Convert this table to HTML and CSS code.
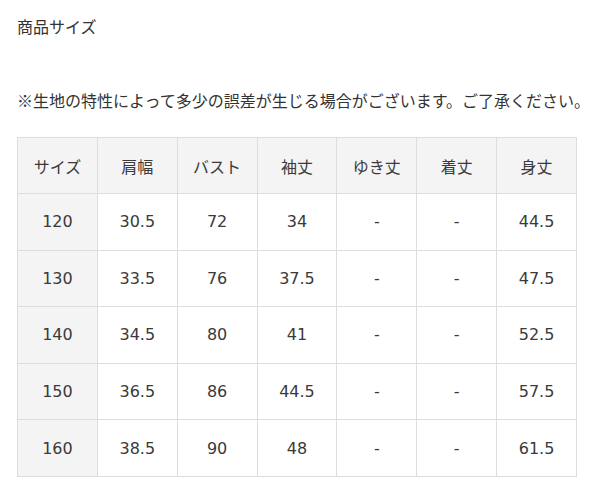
FILE: index.html
```html
<!DOCTYPE html>
<html lang="ja">
<head>
<meta charset="utf-8">
<link rel="stylesheet" href="styles.css">
</head>
<body>
<div class="page">
  <h2 class="title">商品サイズ</h2>
  <p class="note">※生地の特性によって多少の誤差が生じる場合がございます。ご了承ください。</p>
  <table class="size-table">
    <thead>
      <tr><th>サイズ</th><th>肩幅</th><th>バスト</th><th>袖丈</th><th>ゆき丈</th><th>着丈</th><th>身丈</th></tr>
    </thead>
    <tbody>
      <tr><th>120</th><td>30.5</td><td>72</td><td>34</td><td>-</td><td>-</td><td>44.5</td></tr>
      <tr><th>130</th><td>33.5</td><td>76</td><td>37.5</td><td>-</td><td>-</td><td>47.5</td></tr>
      <tr><th>140</th><td>34.5</td><td>80</td><td>41</td><td>-</td><td>-</td><td>52.5</td></tr>
      <tr><th>150</th><td>36.5</td><td>86</td><td>44.5</td><td>-</td><td>-</td><td>57.5</td></tr>
      <tr><th>160</th><td>38.5</td><td>90</td><td>48</td><td>-</td><td>-</td><td>61.5</td></tr>
    </tbody>
  </table>
</div>
</body>
</html>
```
FILE: styles.css
```css
html, body {
  margin: 0;
  padding: 0;
  background: #ffffff;
}
body {
  font-family: "Noto Sans CJK JP", "Noto Sans", sans-serif;
  color: #333333;
}
.page {
  padding: 14px 0 0 17px;
}
.title {
  margin: 0;
  font-size: 16px;
  font-weight: normal;
  line-height: 24px;
}
.note {
  margin: 50px 0 0 0;
  font-size: 16px;
  line-height: 24px;
  white-space: nowrap;
}
.size-table {
  margin-top: 25px;
  border-collapse: collapse;
  table-layout: fixed;
  width: 560px;
}
.size-table th,
.size-table td {
  border: 1px solid #dddddd;
  text-align: center;
  vertical-align: middle;
  font-family: "DejaVu Sans", "Noto Sans CJK JP", sans-serif;
  font-size: 16px;
  font-weight: normal;
  padding: 0;
  color: #3a3a3a;
}
.size-table thead th {
  font-family: "Noto Sans CJK JP", sans-serif;
}
.size-table thead tr {
  height: 56px;
}
.size-table tbody tr {
  height: 56.6px;
}
.size-table thead th,
.size-table tbody th {
  background: #f4f4f4;
}
.size-table td {
  background: #ffffff;
}
```
